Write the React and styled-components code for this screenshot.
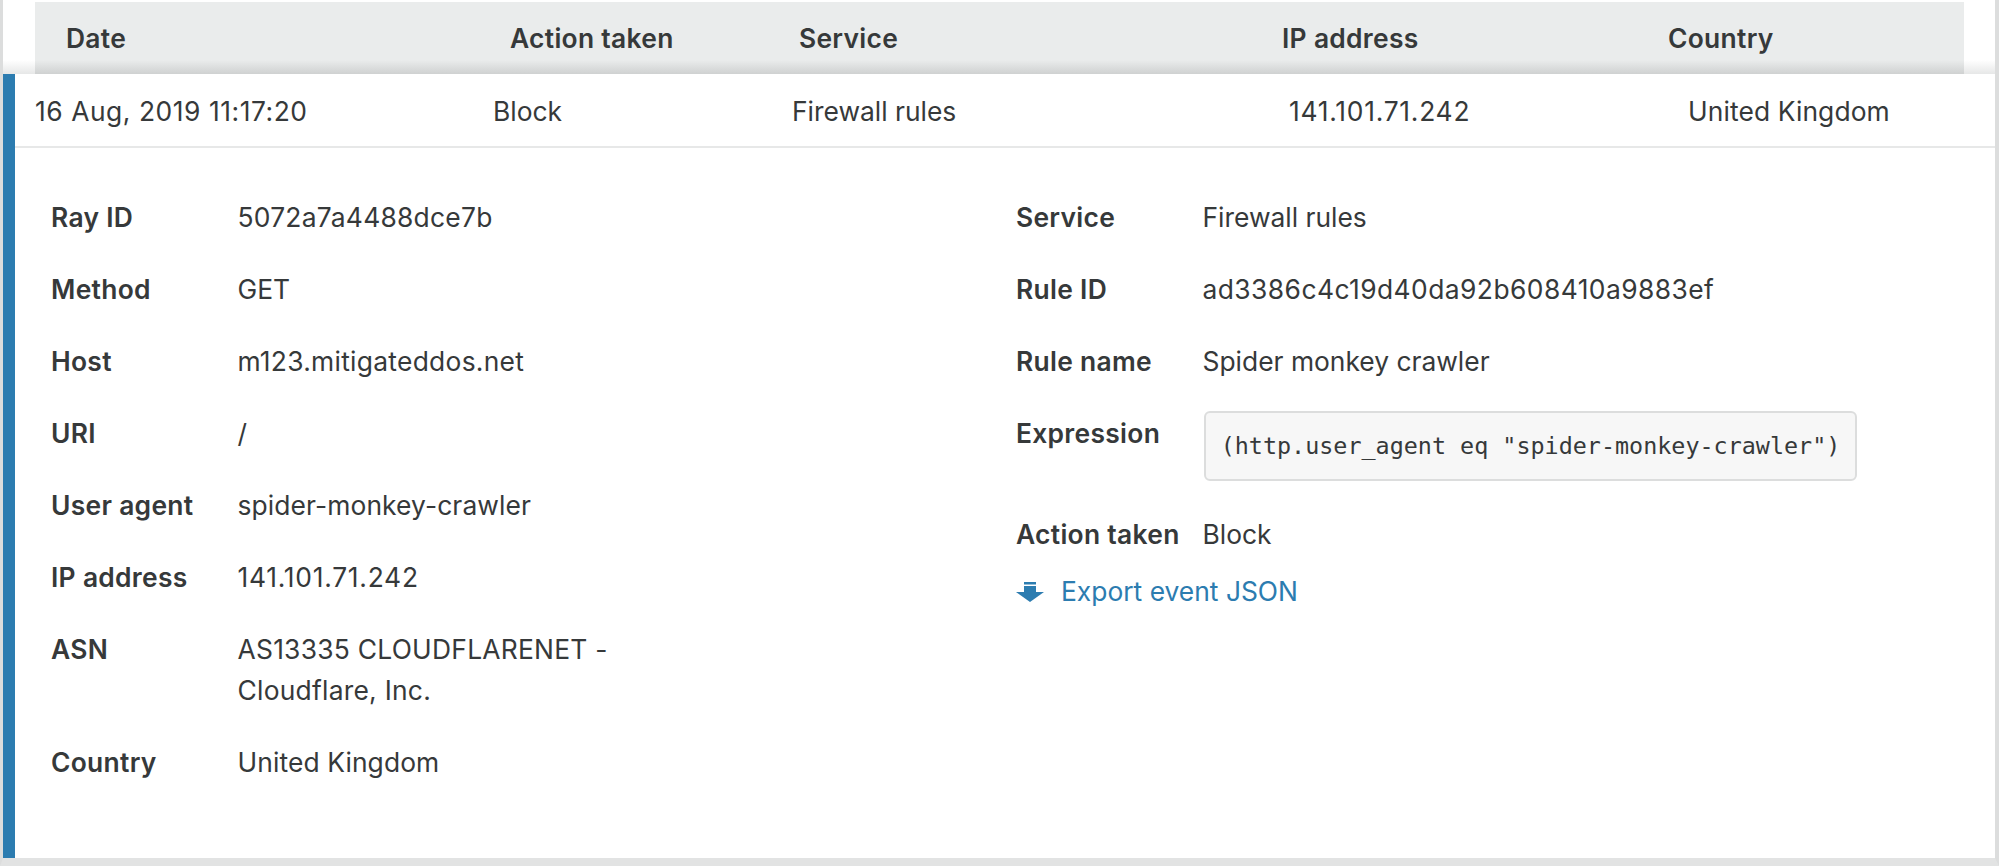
import React from 'react';
import styled, { createGlobalStyle } from 'styled-components';

const GlobalStyle = createGlobalStyle`
    html, body {
        margin: 0;
        padding: 0;
        background: #ffffff;
    }
    body {
        font-family: Inter, "Noto Sans", "Liberation Sans", sans-serif;
        font-size: 26.4px;
        color: #36393a;
        overflow: hidden;
    }
`

const Page = styled.div`
    box-sizing: border-box;
    width: 1999px;
    height: 866px;
    display: flex;
    flex-direction: column;
    background: #ffffff;
    border-left: 3px solid #dcdddd;
    border-right: 4px solid #dcdddd;
    border-bottom: 8px solid #e2e3e3;
`

const HeadStrip = styled.div`
    height: 74px;
    padding: 2px 31px 0 32px;
    box-sizing: border-box;
    background: linear-gradient(to bottom, #ffffff 0, #ffffff 60px, #e6e7e7 74px);
`

const HeadRow = styled.div`
    height: 72px;
    padding-left: 31px;
    display: grid;
    grid-template-columns: 444px 289px 483px 386px 1fr;
    align-items: center;
    background: linear-gradient(to bottom, #eaecec 0, #eaecec 58px, #cfd1d1 72px);
    box-sizing: border-box;
`

const HeadCell = styled.div`
    font-weight: 600;
    letter-spacing: 0.3px;
    white-space: nowrap;
`

const Event = styled.div`
    flex: 1;
    display: flex;
    flex-direction: column;
    border-left: 12px solid #2c7cb0;
`

const EventRow = styled.div`
    height: 74px;
    box-sizing: border-box;
    padding: 2px 0 0 20px;
    display: grid;
    grid-template-columns: 458px 299px 497px 399px 1fr;
    align-items: center;
    border-bottom: 2px solid #e7e8e8;
`

const EventCell = styled.div`
    white-space: nowrap;
    letter-spacing: ${props => props.$track || 0};
`

const Details = styled.div`
    flex: 1;
    display: grid;
    grid-template-columns: 965px 1fr;
    padding: 49px 0 0 36px;
`

const Column = styled.div`
    display: flex;
    flex-direction: column;
`

const Field = styled.div`
    display: grid;
    grid-template-columns: 186.5px 1fr;
    line-height: 41px;
    margin-bottom: 31px;
`

const Label = styled.div`
    font-weight: 600;
    letter-spacing: 0.3px;
    white-space: nowrap;
`

const Value = styled.div`
    max-width: ${props => (props.$narrow ? '420px' : 'none')};
    letter-spacing: ${props => props.$track || 0};
`

const CodeBox = styled.code`
    display: block;
    box-sizing: border-box;
    width: 653px;
    height: 70px;
    margin-top: -2px;
    margin-bottom: 2px;
    margin-left: 1.5px;
    line-height: 66px;
    text-align: center;
    white-space: nowrap;
    font-family: "DejaVu Sans Mono", "Liberation Mono", monospace;
    font-size: 23.4px;
    color: #36393a;
    background: #f7f7f7;
    border: 2px solid #dcdddd;
    border-radius: 6px;
`

const ExportLink = styled.a`
    display: flex;
    align-items: center;
    gap: 17px;
    margin-top: -15px;
    line-height: 41px;
    color: #2c7cb0;
    text-decoration: none;
`

const leftFields = [
    ['Ray ID', '5072a7a4488dce7b', '0.25px'],
    ['Method', 'GET'],
    ['Host', 'm123.mitigateddos.net', '0.28px'],
    ['URI', '/'],
    ['User agent', 'spider-monkey-crawler', '0.1px'],
    ['IP address', '141.101.71.242', '0.75px'],
    ['ASN', 'AS13335 CLOUDFLARENET - Cloudflare, Inc.', '0.25px'],
    ['Country', 'United Kingdom', '0.1px'],
]

const rightFields = [
    ['Service', 'Firewall rules'],
    ['Rule ID', 'ad3386c4c19d40da92b608410a9883ef', '0.44px'],
    ['Rule name', 'Spider monkey crawler'],
]

const DownloadIcon = () => (
    <svg width="28" height="20" viewBox="0 0 28 20" fill="#2c7cb0">
        <rect x="8" y="0" width="12" height="2.5" />
        <rect x="8" y="4" width="12" height="7" />
        <path d="M0 10 H28 L14 20 Z" />
    </svg>
)

export default function App() {
    return (
        <Page>
            <GlobalStyle />
            <HeadStrip>
                <HeadRow>
                    <HeadCell>Date</HeadCell>
                    <HeadCell>Action taken</HeadCell>
                    <HeadCell>Service</HeadCell>
                    <HeadCell>IP address</HeadCell>
                    <HeadCell>Country</HeadCell>
                </HeadRow>
            </HeadStrip>
            <Event>
                <EventRow>
                    <EventCell $track="0.55px">16 Aug, 2019 11:17:20</EventCell>
                    <EventCell>Block</EventCell>
                    <EventCell>Firewall rules</EventCell>
                    <EventCell $track="0.75px">141.101.71.242</EventCell>
                    <EventCell $track="0.1px">United Kingdom</EventCell>
                </EventRow>
                <Details>
                    <Column>
                        {leftFields.map(([label, value, track]) => (
                            <Field key={label}>
                                <Label>{label}</Label>
                                <Value $narrow $track={track}>{value}</Value>
                            </Field>
                        ))}
                    </Column>
                    <Column>
                        {rightFields.map(([label, value, track]) => (
                            <Field key={label}>
                                <Label>{label}</Label>
                                <Value $track={track}>{value}</Value>
                            </Field>
                        ))}
                        <Field>
                            <Label>Expression</Label>
                            <CodeBox>(http.user_agent eq "spider-monkey-crawler")</CodeBox>
                        </Field>
                        <Field>
                            <Label>Action taken</Label>
                            <Value>Block</Value>
                        </Field>
                        <ExportLink href="#">
                            <DownloadIcon />
                            Export event JSON
                        </ExportLink>
                    </Column>
                </Details>
            </Event>
        </Page>
    );
}
